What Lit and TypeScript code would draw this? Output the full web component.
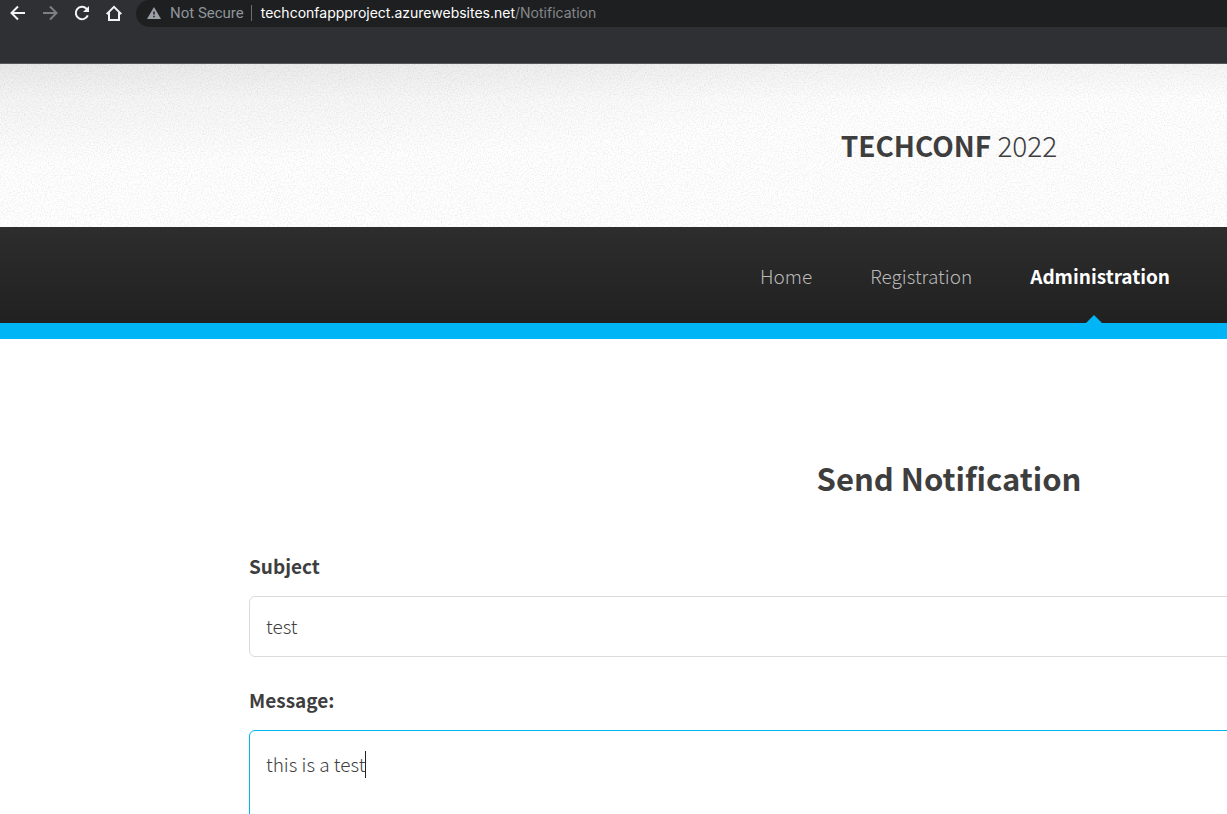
import { LitElement, html, css } from "lit";
import { customElement, state } from "lit/decorators.js";

@customElement("browser-bar")
class BrowserBar extends LitElement {
  static styles = css`
    :host {
      display: block;
      height: 63px;
      background: #2f3034;
      border-bottom: 1px solid #56575a;
      font: 14px/18px Inter, Roboto, sans-serif;
    }
    .toolbar {
      display: flex;
      height: 27px;
    }
    .tools {
      display: flex;
      align-items: center;
      gap: 12px;
      padding: 0 12px 2px 8px;
    }
    .tool {
      border: 0;
      padding: 0;
      background: none;
      width: 20px;
      height: 20px;
      color: #f1f3f4;
    }
    .tool:disabled {
      color: #7d7f83;
    }
    .tool svg {
      display: block;
    }
    .address {
      flex: 1;
      display: flex;
      align-items: center;
      box-sizing: border-box;
      height: 27px;
      padding: 0 0 2px 11px;
      background: #1e1f21;
      border-radius: 14px 0 0 14px;
      color: #8f959a;
      white-space: nowrap;
    }
    .status {
      margin-left: 9px;
      padding-right: 7px;
      font-family: Roboto, sans-serif;
      font-size: 15px;
    }
    .url {
      padding-left: 9px;
      color: #85888b;
      text-decoration: none;
      border-left: 1px solid #6b6e71;
      line-height: 16px;
    }
    .host {
      color: #ffffff;
    }
  `;

  render() {
    return html`
      <div class="toolbar">
        <div class="tools">
          <button class="tool" aria-label="Back">
            <svg width="20" height="20" viewBox="0 0 20 20" fill="none" stroke="currentColor" stroke-width="2"><path d="M17 10H4M10 3.500L3.500 10l6.500 6.500" /></svg>
          </button>
          <button class="tool" aria-label="Forward" disabled>
            <svg width="20" height="20" viewBox="0 0 20 20" fill="none" stroke="currentColor" stroke-width="2"><path d="M3 10h13M10 3.500l6.500 6.500-6.500 6.500" /></svg>
          </button>
          <button class="tool" aria-label="Reload">
            <svg width="20" height="20" viewBox="0 0 20 20" fill="none" stroke="currentColor" stroke-width="2"><path d="M15.800 12.300a6.200 6.200 0 1 1-1.300-6.600l1.500 1.500" /><path d="M17 3v6h-6z" fill="currentColor" stroke="none" /></svg>
          </button>
          <button class="tool" aria-label="Home">
            <svg width="20" height="20" viewBox="0 0 20 20" fill="none" stroke="currentColor" stroke-width="2"><path d="M2.700 11.100L10 3.800l7.300 7.300M5 9.500V17h10V9.500" /></svg>
          </button>
        </div>
        <div class="address">
          <svg width="14" height="12" viewBox="0 0 14 12"><path fill="#9aa0a6" d="M7 0l7 12H0z" /><path d="M7 4.500v3M7 8.800v1.500" stroke="#1e1f21" stroke-width="1.500" /></svg>
          <span class="status">Not Secure</span>
          <a class="url" href="#"><span class="host">techconfappproject.azurewebsites.net</span>/Notification</a>
        </div>
      </div>
    `;
  }
}

@customElement("app-root")
class AppRoot extends LitElement {
  static styles = css`
    :host {
      display: block;
      height: 100vh;
      overflow: hidden;
      background: #ffffff;
      color: #3e3e3e;
      font: 300 19px/28px "Noto Sans CJK SC", "Noto Sans", sans-serif;
    }
    .site {
      min-width: 1898px;
    }
    .banner {
      position: relative;
      display: flex;
      justify-content: center;
      padding: 57px 0 58px;
      background:
        radial-gradient(ellipse 1000px 100px at 0 0, rgba(0, 0, 0, 0.05), rgba(0, 0, 0, 0.03) 50%, transparent),
        linear-gradient(rgba(0, 0, 0, 0.04), transparent 36px),
        #ffffff;
    }
    .grain {
      position: absolute;
      inset: 0;
      width: 100%;
      height: 100%;
    }
    .brand {
      position: relative;
      margin: 0;
      font-size: 28px;
      line-height: 48px;
      font-weight: 300;
    }
    .brand b,
    .current {
      font-weight: 700;
    }
    nav {
      display: flex;
      justify-content: center;
      gap: 58px;
      padding: 35px 0 33px 32px;
      background: linear-gradient(#2d2d2d, #212121);
      border-bottom: 16px solid #00b5f5;
    }
    nav a {
      position: relative;
      color: #bababa;
      text-decoration: none;
    }
    nav .current {
      color: #ffffff;
    }
    .current::after {
      content: "";
      position: absolute;
      left: 50%;
      bottom: -33px;
      margin-left: -14px;
      border: 8px solid transparent;
      border-top: 0;
      border-bottom-color: #00b5f5;
    }
    main {
      max-width: 1400px;
      margin: 0 auto;
      padding-top: 111px;
    }
    h2 {
      margin: 0 0 45px;
      text-align: center;
      font-size: 31px;
      line-height: 56px;
      font-weight: 700;
    }
    label {
      display: block;
      margin-bottom: 15px;
      line-height: 30px;
      font-weight: 700;
    }
    .field {
      position: relative;
      margin-bottom: 28px;
    }
    input,
    textarea {
      display: block;
      box-sizing: border-box;
      width: 100%;
      margin: 0;
      padding: 14px 16px 16px;
      border: 1px solid #dbdbdb;
      border-radius: 6px;
      outline: 0;
      background: #ffffff;
      color: inherit;
      font: inherit;
      line-height: 29px;
    }
    textarea {
      padding-top: 18px;
      height: 200px;
      border-color: #00b5f5;
      resize: none;
      caret-color: transparent;
    }
    .caret {
      position: absolute;
      left: 116px;
      top: 21px;
      width: 1px;
      height: 27px;
      background: #222222;
    }
  `;

  @state() private subject = "test";
  @state() private message = "this is a test";

  render() {
    return html`
      <browser-bar></browser-bar>
      <div class="site">
        <header class="banner">
          <svg class="grain" aria-hidden="true">
            <filter id="grain" x="0" y="0" width="100%" height="100%" color-interpolation-filters="sRGB">
              <feTurbulence type="fractalNoise" baseFrequency="0.7" numOctaves="2" />
              <feColorMatrix values="0 0 0 0 0  0 0 0 0 0  0 0 0 0 0  0.16 0 0 0 -0.065" />
            </filter>
            <rect width="100%" height="100%" filter="url(#grain)" />
          </svg>
          <h1 class="brand"><b>TECHCONF</b> 2022</h1>
        </header>
        <nav>
          <a href="#">Home</a>
          <a href="#">Registration</a>
          <a href="#" class="current" aria-current="page">Administration</a>
        </nav>
        <main>
          <h2>Send Notification</h2>
          <form>
            <label for="subject">Subject</label>
            <div class="field"><input id="subject" type="text" .value=${this.subject} /></div>
            <label for="message">Message:</label>
            <div class="field">
              <textarea id="message" .value=${this.message}></textarea>
              <span class="caret"></span>
            </div>
          </form>
        </main>
      </div>
    `;
  }
}
